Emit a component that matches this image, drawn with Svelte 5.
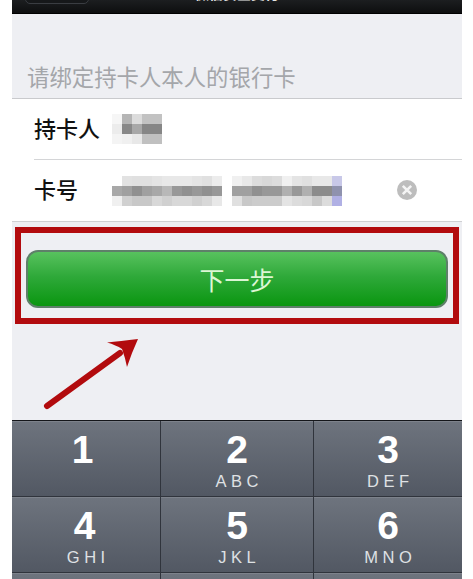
<script>
  // mosaic greys, one row of hex per 10px band
  const nameBlur = [
    ['f6f6f6', 'b5b5b5', 'dcdcdc', 'c2c2c2', 'c2c2c2'],
    ['ececec', '888888', 'a8a8a8', '868686', '868686'],
    ['f4f4f4', 'f0f0f0', 'e8e8e8', 'c0c0c0', 'c0c0c0']
  ];
  const cardA = [
    ['ffffff', 'e2e2e2', 'e0e0e0', 'e0e0e0', 'e4e4e4', 'e8e8e8', 'e8e8e8', 'e8e8e8', 'e4e4e4', 'e0e0e0', 'ececec'],
    ['a8a8a8', 'a0a0a0', '909090', 'a0a0a0', 'a8a8a8', 'b8b8b8', '989898', '909090', '989898', '909090', '989898'],
    ['f0f0f0', 'd0d0d0', 'c8c8c8', 'c8c8c8', 'd8d8d8', 'd0d0d0', 'd8d8d8', 'd8d8d8', 'd0d0d0', 'd8d8d8', 'e8e8e8']
  ];
  const cardB = [
    ['f0f0f0', 'e8e8e8', 'dcdcdc', 'd8d8d8', 'dcdcdc', 'f0f0f0', 'e4e4e4', 'e0e0e0', 'e8e8e8', 'e8e8e8', 'c8c8e8'],
    ['a0a0a0', 'a0a0a0', '909090', '989898', '989898', 'b0b0b0', '989898', 'b0b0b0', '8c8c8c', '8c8c8c', '8f92ae'],
    ['e0e0e0', 'c8c8c8', 'cccccc', 'cccccc', 'cccccc', 'e4e4e4', 'dcdcdc', 'd8d8d8', 'c8c8c8', 'dcdcdc', 'b0b0e4']
  ];

  const keys = [
    ['1', ''], ['2', 'ABC'], ['3', 'DEF'],
    ['4', 'GHI'], ['5', 'JKL'], ['6', 'MNO'],
    ['', ''], ['', ''], ['', '']
  ];
</script>

{#snippet mosaic(rows)}
  <div class="mosaic">
    {#each rows as row}
      <div class="mosaic-row">
        {#each row as c}
          <span class="cell" style="background:#{c}"></span>
        {/each}
      </div>
    {/each}
  </div>
{/snippet}

<div class="screen">
  <header class="nav">
    <div class="back"></div>
    <div class="title">微信安全支付</div>
  </header>

  <p class="hint">请绑定持卡人本人的银行卡</p>

  <div class="group">
    <div class="row">
      <span class="label">持卡人</span>
      {@render mosaic(nameBlur)}
    </div>
    <div class="row second">
      <span class="label">卡号</span>
      <div class="card-no">
        {@render mosaic(cardA)}
        {@render mosaic(cardB)}
      </div>
      <svg class="clear" width="20" height="20" viewBox="0 0 20 20">
        <circle cx="10" cy="10" r="10" fill="#bdbdbd" />
        <path d="M5.8 5.8l8.4 8.4M14.2 5.8l-8.4 8.4" stroke="#f4f4f4" stroke-width="2.6" />
      </svg>
    </div>
  </div>

  <div class="highlight">
    <button class="next">下一步</button>
  </div>

  <svg class="arrow" width="450" height="96" viewBox="0 0 450 96">
    <path d="M35 82L108 29" stroke="#b20b0e" stroke-width="6" stroke-linecap="round" />
    <path d="M126 15Q108 17 95 18.500Q104 21 110 25Q113 33 115 43Q120 28 126 15Z" fill="#b20b0e" />
  </svg>

  <div class="keypad">
    {#each keys as [digit, letters]}
      <div class="key">
        <span class="digit">{digit}</span>
        <span class="letters">{letters}</span>
      </div>
    {/each}
  </div>
</div>

<style>
  :global(body) {
    margin: 0;
    background: #fff;
  }
  .screen {
    width: 450px;
    height: 579px;
    margin-left: 12px;
    background: #eeeff3;
    overflow: hidden;
    font-family: "Liberation Sans", "Noto Sans CJK SC", sans-serif;
  }

  .nav {
    height: 14px;
    box-sizing: border-box;
    border-bottom: 1px solid #000;
    background: linear-gradient(#1c1e20, #0d0e0f);
    position: relative;
    overflow: hidden;
    display: flex;
    justify-content: center;
    align-items: flex-end;
  }
  .back {
    position: absolute;
    left: 13px;
    bottom: 9px;
    width: 62px;
    height: 20px;
    border: 1px solid #3a3d42;
    border-radius: 5px;
    background: #16181a;
  }
  .title {
    color: #e4e4e4;
    font-size: 14px;
    font-weight: 700;
    line-height: 20px;
    margin-bottom: 9px;
    flex-shrink: 0;
  }

  .hint {
    margin: 0;
    padding: 52px 0 7px 15px;
    height: 25px;
    line-height: 25px;
    font-size: 22.4px;
    color: #a4a6aa;
  }

  .group {
    background: #fff;
    border-top: 1px solid #c9cacd;
    border-bottom: 1px solid #cfd0d3;
  }
  .row {
    height: 60px;
    margin-left: 22px;
    display: flex;
    align-items: center;
    position: relative;
  }
  .row.second {
    height: 61px;
    border-top: 1px solid #d4d5d7;
  }
  .label {
    width: 78px;
    margin-top: -5px;
    font-size: 22px;
    font-weight: 500;
    color: #111;
  }
  .mosaic {
    flex-shrink: 0;
    filter: blur(0.5px);
  }
  .mosaic-row {
    display: flex;
    height: 10px;
  }
  .cell {
    width: 10px;
    height: 10px;
  }
  .card-no {
    display: flex;
    gap: 10px;
  }
  .clear {
    position: absolute;
    left: 363px;
    top: 20px;
  }

  .highlight {
    box-sizing: border-box;
    width: 444px;
    height: 97px;
    margin: 5px 0 0 3px;
    padding: 17px 5px 10px;
    border: 6px solid #b20b0e;
  }
  .next {
    display: block;
    width: 422px;
    height: 58px;
    box-sizing: border-box;
    padding: 0;
    border: 2px solid #5e8069;
    border-radius: 12px;
    background: linear-gradient(#58c25e, #2fa93a 45%, #0a9610);
    color: #dcf6d4;
    font: 400 25px "Liberation Sans", "Noto Sans CJK SC", sans-serif;
  }

  .arrow {
    display: block;
  }

  .keypad {
    border-top: 1px solid #14161a;
    display: grid;
    grid-template-columns: 149px 153px 148px;
    grid-auto-rows: 76px;
  }
  .key {
    box-sizing: border-box;
    border-right: 1px solid #30343c;
    border-bottom: 1px solid #30343c;
    box-shadow: inset 0 1px 0 #7d828b;
    background: linear-gradient(#6e747e, #525863);
    color: #fff;
    display: flex;
    flex-direction: column;
    align-items: center;
  }
  .key:nth-child(3n) {
    border-right: 0;
  }
  .key:nth-child(3n + 1) .digit {
    margin-right: 3px;
  }
  .key:first-child .digit {
    margin-right: 7px;
  }
  .digit {
    height: 48px;
    line-height: 58px;
    font-size: 39px;
    font-weight: 700;
  }
  .letters {
    height: 20px;
    line-height: 24px;
    font-size: 16.5px;
    letter-spacing: 4.5px;
    margin-right: -4.5px;
    color: #dfe1e4;
  }
</style>
